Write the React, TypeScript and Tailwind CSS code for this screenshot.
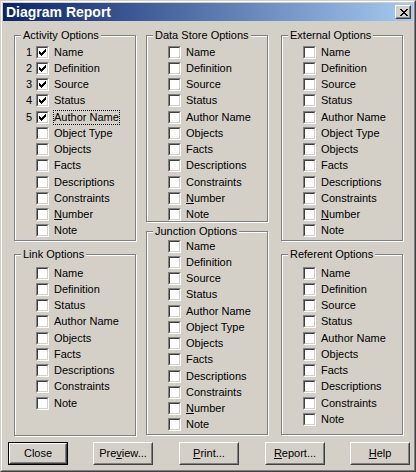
import React from "react";

const ACT = ["Name","Definition","Source","Status","Author Name","Object Type","Objects","Facts","Descriptions","Constraints","Number","Note"];
const DS = ["Name","Definition","Source","Status","Author Name","Objects","Facts","Descriptions","Constraints","Number","Note"];
const LINK = ["Name","Definition","Status","Author Name","Objects","Facts","Descriptions","Constraints","Note"];
const REF = ["Name","Definition","Source","Status","Author Name","Objects","Facts","Descriptions","Constraints","Note"];

function CheckMark() {
  return (
    <svg width="7" height="7" viewBox="0 0 7 7" shapeRendering="crispEdges" className="block">
      <path
        fill="#000"
        d="M6 0h1v1h-1z M5 1h2v1h-2z M0 2h1v1h-1z M4 2h3v1h-3z M0 3h2v1h-2z M3 3h3v1h-3z M0 4h5v1h-5z M1 5h3v1h-3z M2 6h1v1h-1z"
      />
    </svg>
  );
}

function Checkbox({ checked }: { checked?: boolean }) {
  return (
    <div className="w-[13px] h-[13px] shrink-0 border border-t-[#808080] border-l-[#808080] border-b-white border-r-white">
      <div className="w-full h-full border border-t-[#404040] border-l-[#404040] border-b-[#d4d0c8] border-r-[#d4d0c8] bg-white flex items-center justify-center">
        {checked && <CheckMark />}
      </div>
    </div>
  );
}

function Label({ text }: { text: string }) {
  if (text === "Number") {
    return (
      <>
        <span className="underline underline-offset-[1px]">N</span>umber
      </>
    );
  }
  return <>{text}</>;
}

function Row({ text, checked, num, focus }: { text: string; checked?: boolean; num?: number; focus?: boolean }) {
  return (
    <div className="flex items-center h-[16.25px]">
      <div className="w-[21px] pr-[4px] text-right leading-[13px] shrink-0">{num ?? ""}</div>
      <Checkbox checked={checked} />
      {focus ? (
        <span className="ml-[4px] leading-[13px] border border-dotted border-black whitespace-nowrap">
          <Label text={text} />
        </span>
      ) : (
        <span className="ml-[5px] leading-[13px] whitespace-nowrap">
          <Label text={text} />
        </span>
      )}
    </div>
  );
}

function Group({
  title,
  items,
  h,
  pt,
  mt,
  activity,
}: {
  title: string;
  items: string[];
  h: string;
  pt: string;
  mt?: string;
  activity?: boolean;
}) {
  return (
    <div
      className={`relative w-[122px] border border-[#808080] shadow-[1px_1px_0_#fff,inset_1px_1px_0_#fff] ${h} ${pt} ${mt ?? ""}`}
    >
      <div className="absolute left-[6px] top-[-7px] px-[2px] bg-[#d4d0c8] leading-[13px] whitespace-nowrap">
        {title}
      </div>
      <div className="flex flex-col">
        {items.map((t, i) => (
          <Row
            key={t}
            text={t}
            checked={activity && i < 5}
            num={activity && i < 5 ? i + 1 : undefined}
            focus={activity && i === 4}
          />
        ))}
      </div>
    </div>
  );
}

function Button({ children, def, ml }: { children: React.ReactNode; def?: boolean; ml: string }) {
  const inner = (
    <div className="w-full h-full border border-t-white border-l-white border-b-[#404040] border-r-[#404040]">
      <div className="w-full h-full border border-t-[#d4d0c8] border-l-[#d4d0c8] border-b-[#808080] border-r-[#808080] flex items-center justify-center leading-[13px]">
        {children}
      </div>
    </div>
  );
  return (
    <div className={`w-[60px] h-[23px] ${ml} ${def ? "border border-black" : ""}`}>{inner}</div>
  );
}

function CloseX() {
  return (
    <svg width="8" height="7" viewBox="0 0 8 7" shapeRendering="crispEdges" className="block">
      <path
        fill="#000"
        d="M0 0h2v1h-2z M6 0h2v1h-2z M1 1h2v1h-2z M5 1h2v1h-2z M2 2h4v1h-4z M3 3h2v1h-2z M2 4h4v1h-4z M1 5h2v1h-2z M5 5h2v1h-2z M0 6h2v1h-2z M6 6h2v1h-2z"
      />
    </svg>
  );
}

export default function App() {
  return (
    <div className="w-[416px] h-[472px] bg-[#d4d0c8] font-['Liberation_Sans',Arial,sans-serif] text-[11px] text-black">
      <div className="w-full h-full border border-t-[#d4d0c8] border-l-[#d4d0c8] border-b-[#404040] border-r-[#404040]">
        <div className="w-full h-full border border-t-white border-l-white border-b-[#808080] border-r-[#808080] p-[1px] flex flex-col">
          {/* Title bar */}
          <div className="h-[18px] flex items-center justify-between pl-[3px] pr-[2px] bg-[linear-gradient(to_right,#0a246a,#a6caf0)]">
            <span className="text-white font-bold text-[14px] leading-[18px] whitespace-nowrap">Diagram Report</span>
            <div className="w-[16px] h-[14px] bg-[#d4d0c8] border border-t-white border-l-white border-b-[#404040] border-r-[#404040]">
              <div className="w-full h-full border border-t-[#d4d0c8] border-l-[#d4d0c8] border-b-[#808080] border-r-[#808080] flex items-center justify-center pl-[1px]">
                <CloseX />
              </div>
            </div>
          </div>

          {/* Groups */}
          <div className="flex mt-[14px] h-[401px]">
            <div className="flex flex-col ml-[11px]">
              <Group title="Activity Options" items={ACT} h="h-[206px]" pt="pt-[8px]" activity />
              <Group title="Link Options" items={LINK} h="h-[182px]" pt="pt-[10px]" mt="mt-[13px]" />
            </div>
            <div className="flex flex-col ml-[10px]">
              <Group title="Data Store Options" items={DS} h="h-[187px]" pt="pt-[8px]" />
              <Group title="Junction Options" items={ACT} h="h-[204px]" pt="pt-[6px]" mt="mt-[9px]" />
            </div>
            <div className="flex flex-col ml-[13px]">
              <Group title="External Options" items={ACT} h="h-[206px]" pt="pt-[8px]" />
              <Group title="Referent Options" items={REF} h="h-[181px]" pt="pt-[10px]" mt="mt-[13px]" />
            </div>
          </div>

          {/* Buttons */}
          <div className="flex mt-[6px]">
            <Button def ml="ml-[5px]">Close</Button>
            <Button ml="ml-[25px]">
              <span>
                Pre<span className="underline underline-offset-[1px]">v</span>iew...
              </span>
            </Button>
            <Button ml="ml-[26px]">
              <span>
                <span className="underline underline-offset-[1px]">P</span>rint...
              </span>
            </Button>
            <Button ml="ml-[26px]">
              <span>
                <span className="underline underline-offset-[1px]">R</span>eport...
              </span>
            </Button>
            <Button ml="ml-[25px]">
              <span>
                <span className="underline underline-offset-[1px]">H</span>elp
              </span>
            </Button>
          </div>
        </div>
      </div>
    </div>
  );
}
